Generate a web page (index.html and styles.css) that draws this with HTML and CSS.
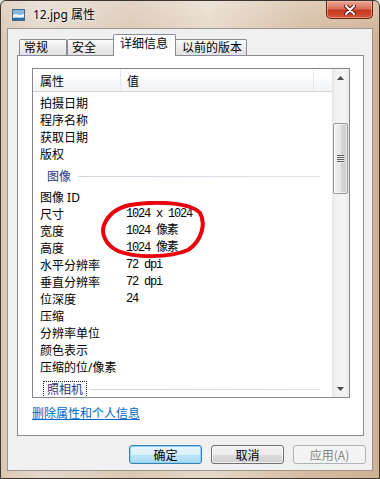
FILE: index.html
```html
<!DOCTYPE html>
<html lang="zh-CN">
<head>
    <meta charset="UTF-8">
    <title>12.jpg 属性</title>
    <link rel="stylesheet" href="styles.css">
</head>
<body>
    <div class="window">
        <div class="titlebar">
            <svg class="app-icon" width="13" height="12" viewBox="0 0 13 12">
                <rect x="0.5" y="0.5" width="12" height="11" fill="#86b8dc" stroke="#3d6b92"/>
                <path d="M1 6 C4 3.5 8 8 12 4.5 V7.5 C8 10 4 6.5 1 9 Z" fill="#eef6fb"/>
                <rect x="1" y="9" width="11" height="2" fill="#2f6d9e"/>
            </svg>
            <span class="title">12.jpg 属性</span>
            <div class="close">
                <svg width="12" height="10" viewBox="0 0 12 10">
                    <path d="M2 1 L10 9 M10 1 L2 9" stroke="#5b1a0f" stroke-width="4" stroke-linecap="round"/>
                    <path d="M2 1 L10 9 M10 1 L2 9" stroke="#fff" stroke-width="2" stroke-linecap="round"/>
                </svg>
            </div>
        </div>

        <div class="client">
            <div class="tabs">
                <div class="tab tab-short">常规</div>
                <div class="tab tab-short">安全</div>
                <div class="tab active">详细信息</div>
                <div class="tab">以前的版本</div>
            </div>

            <div class="panel">
                <div class="listview">
                    <div class="list-main">
                        <div class="list-head">
                            <div class="col-name">属性</div>
                            <div class="col-value">值</div>
                            <div class="col-rest"></div>
                        </div>
                        <div class="list-body">
                            <div class="row"><span class="label">拍摄日期</span><span class="value"></span></div>
                            <div class="row"><span class="label">程序名称</span><span class="value"></span></div>
                            <div class="row"><span class="label">获取日期</span><span class="value"></span></div>
                            <div class="row"><span class="label">版权</span><span class="value"></span></div>
                            <div class="group"><span class="group-label">图像</span><span class="group-line"></span></div>
                            <div class="row"><span class="label">图像 ID</span><span class="value"></span></div>
                            <div class="row"><span class="label">尺寸</span><span class="value">1024 x 1024</span></div>
                            <div class="row"><span class="label">宽度</span><span class="value">1024 像素</span></div>
                            <div class="row"><span class="label">高度</span><span class="value">1024 像素</span></div>
                            <div class="row"><span class="label">水平分辨率</span><span class="value">72 dpi</span></div>
                            <div class="row"><span class="label">垂直分辨率</span><span class="value">72 dpi</span></div>
                            <div class="row"><span class="label">位深度</span><span class="value">24</span></div>
                            <div class="row"><span class="label">压缩</span><span class="value"></span></div>
                            <div class="row"><span class="label">分辨率单位</span><span class="value"></span></div>
                            <div class="row"><span class="label">颜色表示</span><span class="value"></span></div>
                            <div class="row"><span class="label">压缩的位/像素</span><span class="value"></span></div>
                            <div class="group focused"><span class="group-label">照相机</span><span class="group-line"></span></div>
                        </div>
                    </div>

                    <div class="scrollbar">
                        <div class="sb-arrow">
                            <svg width="7" height="4" viewBox="0 0 7 4"><path d="M0 4 L3.5 0 L7 4 Z" fill="#4a4a4a"/></svg>
                        </div>
                        <div class="sb-track">
                            <div class="sb-thumb"><span class="grip"></span></div>
                        </div>
                        <div class="sb-arrow">
                            <svg width="7" height="4" viewBox="0 0 7 4"><path d="M0 0 L7 0 L3.5 4 Z" fill="#4a4a4a"/></svg>
                        </div>
                    </div>

                    <!-- red marker drawn over the size rows -->
                    <svg class="marker" width="106" height="58" viewBox="0 0 106 58">
                        <path d="M30 4 C55 0 90 1 100 12 C106 22 102 40 88 49 C70 57 35 57 18 50 C5 44 1 32 4 24 C8 14 16 7 30 4 Z"
                              fill="none" stroke="#e8000b" stroke-width="4"/>
                    </svg>
                </div>

                <a class="remove-link" href="#">删除属性和个人信息</a>
            </div>

            <div class="buttons">
                <button class="btn default">确定</button>
                <button class="btn">取消</button>
                <button class="btn" disabled>应用(A)</button>
            </div>
        </div>
    </div>
</body>
</html>
```

FILE: styles.css
```css
* {
    box-sizing: border-box;
}

html, body {
    margin: 0;
    padding: 0;
}

body {
    width: 380px;
    height: 479px;
    overflow: hidden;
    background: #e9e3dc;
    font-family: "Noto Sans", "Noto Sans CJK SC", sans-serif;
    font-size: 12px;
    color: #000;
}

.window {
    width: 380px;
    height: 479px;
    border: 1px solid #3b3632;
    border-radius: 6px 6px 0 0;
    padding: 0 6px 7px;
    display: flex;
    flex-direction: column;
    background:
        linear-gradient(to bottom, rgba(255,255,255,0.25), rgba(255,255,255,0) 40px),
        linear-gradient(to right, #dcc8b3 0%, #e4d8cc 10%, #dac7b3 35%, #e6d9ca 55%, #d5bca2 80%, #cfb193 100%);
}

/* Title bar */
.titlebar {
    height: 27px;
    display: flex;
    align-items: flex-start;
}

.app-icon {
    margin: 8px 0 0 5px;
}

.title {
    margin: 5px 0 0 8px;
    line-height: 17px;
    font-size: 12px;
    text-shadow: 0 0 6px rgba(255,255,255,0.9), 0 0 2px rgba(255,255,255,0.9);
}

.close {
    margin-left: auto;
    width: 47px;
    height: 18px;
    border: 1px solid #6a2215;
    border-top: none;
    border-radius: 0 0 5px 5px;
    background: linear-gradient(to bottom, #e9a898 0%, #d96e57 45%, #c6371f 55%, #d2553a 100%);
    box-shadow: inset 0 0 0 1px rgba(255,200,180,0.5);
    display: flex;
    align-items: center;
    justify-content: center;
}

/* Client area */
.client {
    flex: 1;
    display: flex;
    flex-direction: column;
    border: 1px solid #9d958c;
    background: #f0f0f0;
    padding: 5px 8px 6px 9px;
}

.tabs {
    display: flex;
    align-items: flex-end;
    padding-left: 2px;
}

.tab {
    position: relative;
    height: 16px;
    line-height: 15px;
    padding: 0 4px 0 7px;
    border: 1px solid #898c95;
    border-bottom: none;
    border-radius: 2px 2px 0 0;
    background: linear-gradient(to bottom, #fcfcfc, #ececec 50%, #e3e3e3);
    white-space: nowrap;
}

.tab-short {
    width: 48px;
    padding-left: 4px;
}

.tab.active {
    z-index: 1;
    height: 22px;
    line-height: 18px;
    margin: 0 -2px -1px;
    padding: 0 7px 0 6px;
    background: #fff;
}

.panel {
    flex: 1;
    display: flex;
    flex-direction: column;
    border: 1px solid #898c95;
    background: #fff;
    padding: 12px 13px 0 14px;
}

/* List view */
.listview {
    position: relative;
    height: 330px;
    display: flex;
    border: 1px solid #828790;
    overflow: hidden;
}

.list-main {
    flex: 1;
    min-width: 0;
    display: flex;
    flex-direction: column;
}

.list-head {
    height: 23px;
    display: flex;
    border-bottom: 1px solid #d5d5d5;
    background: linear-gradient(to bottom, #ffffff 0%, #ffffff 40%, #f7f8f9 60%, #f2f3f5 100%);
}

.list-head > div {
    padding-top: 5px;
    line-height: 16px;
}

.col-name {
    width: 88px;
    padding-left: 7px;
    border-right: 1px solid #e3e6ea;
}

.col-value {
    width: 193px;
    padding-left: 6px;
    border-right: 1px solid #e3e6ea;
}

.col-rest {
    flex: 1;
}

.list-body {
    flex: 1;
    padding-top: 3px;
    overflow: hidden;
}

.row {
    height: 17px;
    line-height: 17px;
    display: flex;
    white-space: nowrap;
}

.label {
    width: 93px;
    padding-left: 7px;
}

.value {
    font-family: "Liberation Mono", "Noto Sans CJK SC", monospace;
    font-size: 12px;
    letter-spacing: -1.2px;
}

.group {
    height: 26px;
    display: flex;
    align-items: center;
    padding: 0 12px 0 10px;
}

.group-label {
    color: #1e3287;
    line-height: 15px;
    padding: 0 3px;
    border: 1px solid transparent;
}

.group.focused .group-label {
    border: 1px dotted #222;
}

.group-line {
    flex: 1;
    height: 1px;
    margin-left: 3px;
    background: linear-gradient(to right, #cfd6e2, #dfe3ea);
}

/* Scrollbar */
.scrollbar {
    width: 17px;
    display: flex;
    flex-direction: column;
    background: linear-gradient(to right, #e6e6e6, #f2f2f2 25%, #f4f4f4 75%, #ebebeb);
}

.sb-arrow {
    height: 17px;
    display: flex;
    align-items: center;
    justify-content: center;
}

.sb-track {
    flex: 1;
}

.sb-thumb {
    height: 71px;
    margin: 37px 1px 0;
    border: 1px solid #979797;
    border-radius: 2px;
    background: linear-gradient(to right, #f3f3f3, #e6e6e6 50%, #d6d6d6 51%, #cdcdcd);
    box-shadow: inset 0 0 0 1px rgba(255,255,255,0.6);
    display: flex;
    align-items: center;
    justify-content: center;
}

.grip {
    width: 7px;
    height: 8px;
    background: repeating-linear-gradient(to bottom, #5c5c5c 0, #5c5c5c 1px, #f0f0f0 1px, #f0f0f0 2px);
}

.marker {
    position: absolute;
    left: 67px;
    top: 132px;
}

.remove-link {
    align-self: flex-start;
    margin-top: 8px;
    line-height: 16px;
    color: #0066cc;
    text-decoration: underline;
}

/* Dialog buttons */
.buttons {
    display: flex;
    justify-content: flex-end;
    gap: 9px;
    margin: 9px -2px 0 0;
}

.btn {
    width: 73px;
    height: 19px;
    padding: 0;
    font-family: "Noto Sans CJK SC", sans-serif;
    font-size: 12px;
    line-height: 16px;
    color: #000;
    border: 1px solid #707070;
    border-radius: 3px;
    background: linear-gradient(to bottom, #f2f2f2 0%, #ebebeb 50%, #dddddd 51%, #cfcfcf 100%);
    box-shadow: inset 0 0 0 1px rgba(255,255,255,0.7);
}

.btn.default {
    border-color: #3c7fb1;
    background: linear-gradient(to bottom, #eaf6fd 0%, #d9f0fc 50%, #bee6fd 51%, #a7d9f5 100%);
    box-shadow: inset 0 0 0 1px #8ed3f7;
}

.btn:disabled {
    color: #838383;
    border-color: #adb2b5;
    background: #f4f4f4;
    box-shadow: none;
}
```
